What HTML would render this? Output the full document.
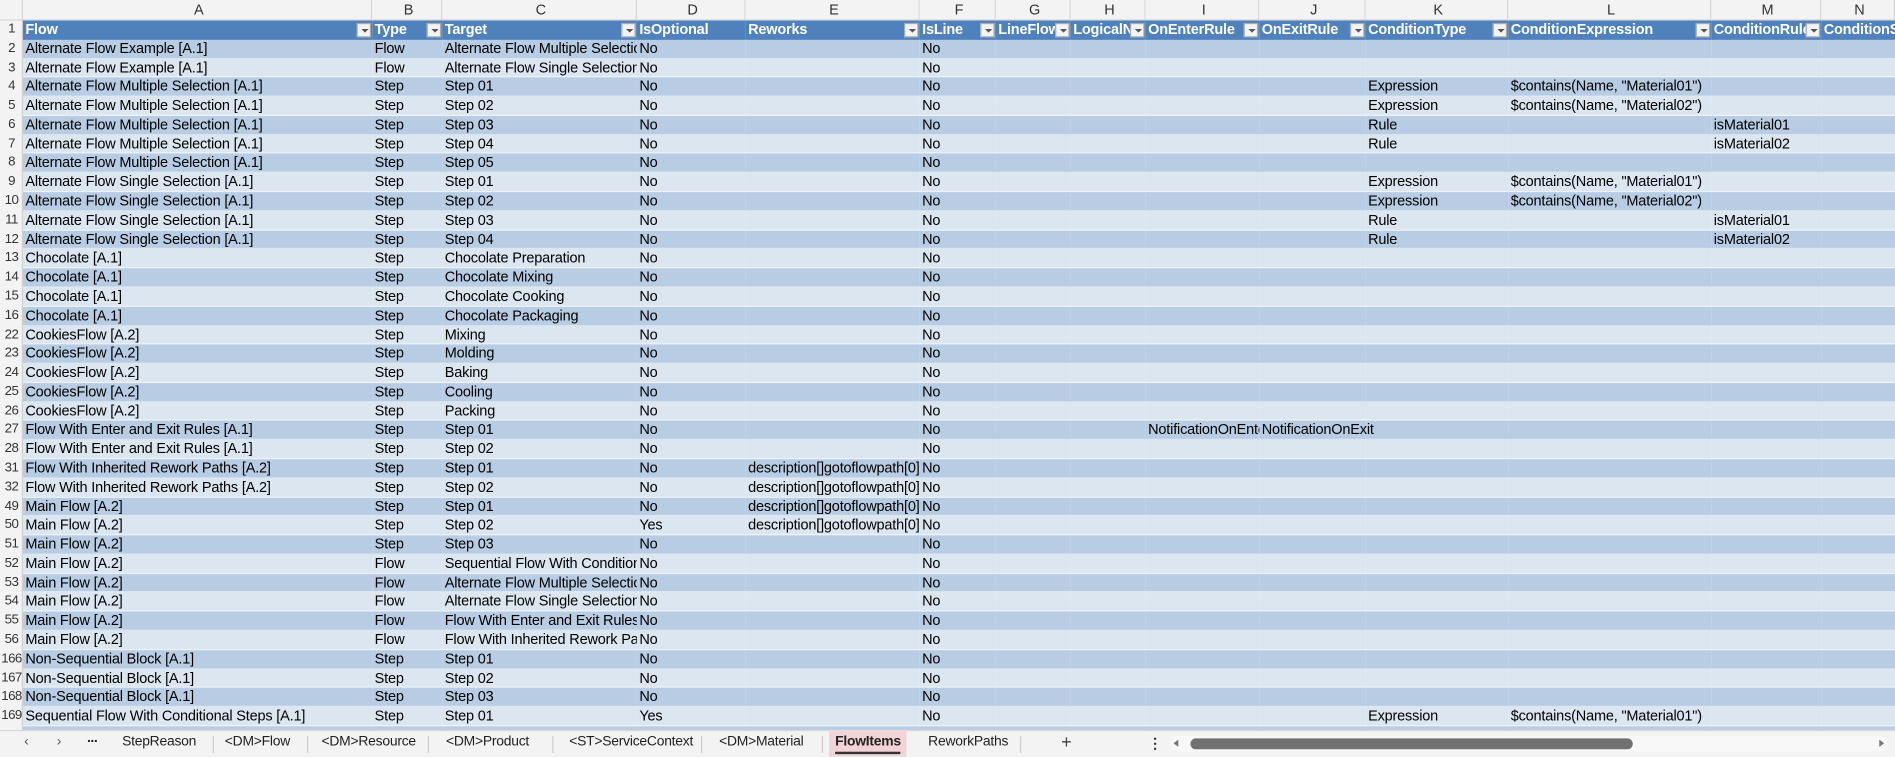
<!DOCTYPE html>
<html><head><meta charset="utf-8"><style>
html,body{margin:0;padding:0;width:1895px;height:757px;overflow:hidden;background:#fff}
#w{width:1568px;height:626.4px;transform:scale(1.20855);transform-origin:0 0;position:relative;font-family:"Liberation Sans",sans-serif;font-size:12px;color:#000}
table{border-collapse:separate;border-spacing:0;table-layout:fixed;position:absolute;left:0;top:0;width:1568px}
td{padding:0 0 0 2px;margin:0;border:0;white-space:nowrap;overflow:hidden;height:15.78px;line-height:15.78px;letter-spacing:-0.15px;box-sizing:border-box;vertical-align:middle}
tr.ch td{height:17px;line-height:17px;background:#f3f3f3;text-align:center;color:#333;box-shadow:inset -1px -1px 0 #d4d4d4}
td.rn{text-align:center;background:#f3f3f3;color:#333;padding:0;box-shadow:inset -1px 0 0 #d0d0d0;font-size:11px;letter-spacing:-0.5px}
tr.h td{background:#4f81bd;color:#fff;font-weight:bold;position:relative}
tr.h td.rn{background:#f3f3f3;color:#333;font-weight:normal}
tr.d td{background:#b8cce4;box-shadow:inset 0 -1px 0 #dce6f1}
tr.l td{background:#dce6f1;box-shadow:inset 0 -1px 0 #eef2f8}
tr.d td.rn,tr.l td.rn{background:#f3f3f3;box-shadow:inset -1px 0 0 #d0d0d0}
.f{position:absolute;right:1px;top:1.5px;width:12px;height:12px;background:#f4f4f4;border:1px solid #aaa;box-sizing:border-box}
.f:after{content:"";position:absolute;left:3px;top:4px;border-left:3px solid transparent;border-right:3px solid transparent;border-top:3px solid #555}
.ov{overflow:visible}
#tabs{position:absolute;left:0;top:604px;width:1568px;height:22.4px;background:#f3f3f3;border-top:1px solid #d8d8d8;font-size:11.5px;color:#222;letter-spacing:-0.2px}
#tabs span{position:absolute;top:3px}
.sep{position:absolute;top:4px;width:1px;height:14px;background:#ccc}
</style></head><body><div id="w">
<table>
<colgroup><col style="width:19px"><col style="width:289px"><col style="width:58px"><col style="width:161px"><col style="width:90px"><col style="width:144px"><col style="width:63px"><col style="width:62px"><col style="width:62px"><col style="width:94px"><col style="width:88px"><col style="width:118px"><col style="width:168px"><col style="width:91px"><col style="width:61px"></colgroup>
<tr class="ch"><td style="background:#f3f3f3"></td><td>A</td><td>B</td><td>C</td><td>D</td><td>E</td><td>F</td><td>G</td><td>H</td><td>I</td><td>J</td><td>K</td><td>L</td><td>M</td><td>N</td></tr>
<tr class="h"><td class="rn">1</td><td>Flow<i class="f"></i></td><td>Type<i class="f"></i></td><td>Target<i class="f"></i></td><td>IsOptional</td><td>Reworks<i class="f"></i></td><td>IsLine<i class="f"></i></td><td>LineFlow<i class="f"></i></td><td>LogicalNa<i class="f"></i></td><td>OnEnterRule<i class="f"></i></td><td>OnExitRule<i class="f"></i></td><td>ConditionType<i class="f"></i></td><td>ConditionExpression<i class="f"></i></td><td>ConditionRule<i class="f"></i></td><td>ConditionS</td></tr>
<tr class="d"><td class="rn">2</td><td>Alternate Flow Example [A.1]</td><td>Flow</td><td>Alternate Flow Multiple Selection</td><td>No</td><td></td><td>No</td><td></td><td></td><td></td><td></td><td></td><td></td><td></td><td></td></tr>
<tr class="l"><td class="rn">3</td><td>Alternate Flow Example [A.1]</td><td>Flow</td><td>Alternate Flow Single Selection</td><td>No</td><td></td><td>No</td><td></td><td></td><td></td><td></td><td></td><td></td><td></td><td></td></tr>
<tr class="d"><td class="rn">4</td><td>Alternate Flow Multiple Selection [A.1]</td><td>Step</td><td>Step 01</td><td>No</td><td></td><td>No</td><td></td><td></td><td></td><td></td><td>Expression</td><td>$contains(Name, "Material01")</td><td></td><td></td></tr>
<tr class="l"><td class="rn">5</td><td>Alternate Flow Multiple Selection [A.1]</td><td>Step</td><td>Step 02</td><td>No</td><td></td><td>No</td><td></td><td></td><td></td><td></td><td>Expression</td><td>$contains(Name, "Material02")</td><td></td><td></td></tr>
<tr class="d"><td class="rn">6</td><td>Alternate Flow Multiple Selection [A.1]</td><td>Step</td><td>Step 03</td><td>No</td><td></td><td>No</td><td></td><td></td><td></td><td></td><td>Rule</td><td></td><td>isMaterial01</td><td></td></tr>
<tr class="l"><td class="rn">7</td><td>Alternate Flow Multiple Selection [A.1]</td><td>Step</td><td>Step 04</td><td>No</td><td></td><td>No</td><td></td><td></td><td></td><td></td><td>Rule</td><td></td><td>isMaterial02</td><td></td></tr>
<tr class="d"><td class="rn">8</td><td>Alternate Flow Multiple Selection [A.1]</td><td>Step</td><td>Step 05</td><td>No</td><td></td><td>No</td><td></td><td></td><td></td><td></td><td></td><td></td><td></td><td></td></tr>
<tr class="l"><td class="rn">9</td><td>Alternate Flow Single Selection [A.1]</td><td>Step</td><td>Step 01</td><td>No</td><td></td><td>No</td><td></td><td></td><td></td><td></td><td>Expression</td><td>$contains(Name, "Material01")</td><td></td><td></td></tr>
<tr class="d"><td class="rn">10</td><td>Alternate Flow Single Selection [A.1]</td><td>Step</td><td>Step 02</td><td>No</td><td></td><td>No</td><td></td><td></td><td></td><td></td><td>Expression</td><td>$contains(Name, "Material02")</td><td></td><td></td></tr>
<tr class="l"><td class="rn">11</td><td>Alternate Flow Single Selection [A.1]</td><td>Step</td><td>Step 03</td><td>No</td><td></td><td>No</td><td></td><td></td><td></td><td></td><td>Rule</td><td></td><td>isMaterial01</td><td></td></tr>
<tr class="d"><td class="rn">12</td><td>Alternate Flow Single Selection [A.1]</td><td>Step</td><td>Step 04</td><td>No</td><td></td><td>No</td><td></td><td></td><td></td><td></td><td>Rule</td><td></td><td>isMaterial02</td><td></td></tr>
<tr class="l"><td class="rn">13</td><td>Chocolate [A.1]</td><td>Step</td><td>Chocolate Preparation</td><td>No</td><td></td><td>No</td><td></td><td></td><td></td><td></td><td></td><td></td><td></td><td></td></tr>
<tr class="d"><td class="rn">14</td><td>Chocolate [A.1]</td><td>Step</td><td>Chocolate Mixing</td><td>No</td><td></td><td>No</td><td></td><td></td><td></td><td></td><td></td><td></td><td></td><td></td></tr>
<tr class="l"><td class="rn">15</td><td>Chocolate [A.1]</td><td>Step</td><td>Chocolate Cooking</td><td>No</td><td></td><td>No</td><td></td><td></td><td></td><td></td><td></td><td></td><td></td><td></td></tr>
<tr class="d"><td class="rn">16</td><td>Chocolate [A.1]</td><td>Step</td><td>Chocolate Packaging</td><td>No</td><td></td><td>No</td><td></td><td></td><td></td><td></td><td></td><td></td><td></td><td></td></tr>
<tr class="l"><td class="rn">22</td><td>CookiesFlow [A.2]</td><td>Step</td><td>Mixing</td><td>No</td><td></td><td>No</td><td></td><td></td><td></td><td></td><td></td><td></td><td></td><td></td></tr>
<tr class="d"><td class="rn">23</td><td>CookiesFlow [A.2]</td><td>Step</td><td>Molding</td><td>No</td><td></td><td>No</td><td></td><td></td><td></td><td></td><td></td><td></td><td></td><td></td></tr>
<tr class="l"><td class="rn">24</td><td>CookiesFlow [A.2]</td><td>Step</td><td>Baking</td><td>No</td><td></td><td>No</td><td></td><td></td><td></td><td></td><td></td><td></td><td></td><td></td></tr>
<tr class="d"><td class="rn">25</td><td>CookiesFlow [A.2]</td><td>Step</td><td>Cooling</td><td>No</td><td></td><td>No</td><td></td><td></td><td></td><td></td><td></td><td></td><td></td><td></td></tr>
<tr class="l"><td class="rn">26</td><td>CookiesFlow [A.2]</td><td>Step</td><td>Packing</td><td>No</td><td></td><td>No</td><td></td><td></td><td></td><td></td><td></td><td></td><td></td><td></td></tr>
<tr class="d"><td class="rn">27</td><td>Flow With Enter and Exit Rules [A.1]</td><td>Step</td><td>Step 01</td><td>No</td><td></td><td>No</td><td></td><td></td><td>NotificationOnEnter</td><td class="ov">NotificationOnExit</td><td></td><td></td><td></td><td></td></tr>
<tr class="l"><td class="rn">28</td><td>Flow With Enter and Exit Rules [A.1]</td><td>Step</td><td>Step 02</td><td>No</td><td></td><td>No</td><td></td><td></td><td></td><td></td><td></td><td></td><td></td><td></td></tr>
<tr class="d"><td class="rn">31</td><td>Flow With Inherited Rework Paths [A.2]</td><td>Step</td><td>Step 01</td><td>No</td><td>description[]gotoflowpath[0]</td><td>No</td><td></td><td></td><td></td><td></td><td></td><td></td><td></td><td></td></tr>
<tr class="l"><td class="rn">32</td><td>Flow With Inherited Rework Paths [A.2]</td><td>Step</td><td>Step 02</td><td>No</td><td>description[]gotoflowpath[0]</td><td>No</td><td></td><td></td><td></td><td></td><td></td><td></td><td></td><td></td></tr>
<tr class="d"><td class="rn">49</td><td>Main Flow [A.2]</td><td>Step</td><td>Step 01</td><td>No</td><td>description[]gotoflowpath[0]</td><td>No</td><td></td><td></td><td></td><td></td><td></td><td></td><td></td><td></td></tr>
<tr class="l"><td class="rn">50</td><td>Main Flow [A.2]</td><td>Step</td><td>Step 02</td><td>Yes</td><td>description[]gotoflowpath[0]</td><td>No</td><td></td><td></td><td></td><td></td><td></td><td></td><td></td><td></td></tr>
<tr class="d"><td class="rn">51</td><td>Main Flow [A.2]</td><td>Step</td><td>Step 03</td><td>No</td><td></td><td>No</td><td></td><td></td><td></td><td></td><td></td><td></td><td></td><td></td></tr>
<tr class="l"><td class="rn">52</td><td>Main Flow [A.2]</td><td>Flow</td><td>Sequential Flow With Conditional Steps</td><td>No</td><td></td><td>No</td><td></td><td></td><td></td><td></td><td></td><td></td><td></td><td></td></tr>
<tr class="d"><td class="rn">53</td><td>Main Flow [A.2]</td><td>Flow</td><td>Alternate Flow Multiple Selection</td><td>No</td><td></td><td>No</td><td></td><td></td><td></td><td></td><td></td><td></td><td></td><td></td></tr>
<tr class="l"><td class="rn">54</td><td>Main Flow [A.2]</td><td>Flow</td><td>Alternate Flow Single Selection</td><td>No</td><td></td><td>No</td><td></td><td></td><td></td><td></td><td></td><td></td><td></td><td></td></tr>
<tr class="d"><td class="rn">55</td><td>Main Flow [A.2]</td><td>Flow</td><td>Flow With Enter and Exit Rules</td><td>No</td><td></td><td>No</td><td></td><td></td><td></td><td></td><td></td><td></td><td></td><td></td></tr>
<tr class="l"><td class="rn">56</td><td>Main Flow [A.2]</td><td>Flow</td><td>Flow With Inherited Rework Paths</td><td>No</td><td></td><td>No</td><td></td><td></td><td></td><td></td><td></td><td></td><td></td><td></td></tr>
<tr class="d"><td class="rn">166</td><td>Non-Sequential Block [A.1]</td><td>Step</td><td>Step 01</td><td>No</td><td></td><td>No</td><td></td><td></td><td></td><td></td><td></td><td></td><td></td><td></td></tr>
<tr class="l"><td class="rn">167</td><td>Non-Sequential Block [A.1]</td><td>Step</td><td>Step 02</td><td>No</td><td></td><td>No</td><td></td><td></td><td></td><td></td><td></td><td></td><td></td><td></td></tr>
<tr class="d"><td class="rn">168</td><td>Non-Sequential Block [A.1]</td><td>Step</td><td>Step 03</td><td>No</td><td></td><td>No</td><td></td><td></td><td></td><td></td><td></td><td></td><td></td><td></td></tr>
<tr class="l"><td class="rn">169</td><td>Sequential Flow With Conditional Steps [A.1]</td><td>Step</td><td>Step 01</td><td>Yes</td><td></td><td>No</td><td></td><td></td><td></td><td></td><td>Expression</td><td>$contains(Name, "Material01")</td><td></td><td></td></tr>
<tr class="d"><td class="rn"></td><td></td><td></td><td></td><td></td><td></td><td></td><td></td><td></td><td></td><td></td><td></td><td></td><td></td><td></td></tr>
</table>
<div id="tabs">
<span style="left:20px;color:#555">&lsaquo;</span><span style="left:47px;color:#555">&rsaquo;</span><span style="left:72px;font-weight:bold;letter-spacing:-1px">&middot;&middot;&middot;</span>
<span style="left:101px">StepReason</span><i class="sep" style="left:176px"></i>
<span style="left:186px">&lt;DM&gt;Flow</span><i class="sep" style="left:254px"></i>
<span style="left:266px">&lt;DM&gt;Resource</span><i class="sep" style="left:354px"></i>
<span style="left:369px">&lt;DM&gt;Product</span><i class="sep" style="left:457px"></i>
<span style="left:471px">&lt;ST&gt;ServiceContext</span><i class="sep" style="left:580px"></i>
<span style="left:595px">&lt;DM&gt;Material</span><i class="sep" style="left:680px"></i>
<div style="position:absolute;left:686px;top:-1px;width:64px;height:22px;background:#f2d4d6;border:1px solid #ddd;box-sizing:border-box"></div>
<span style="left:691px;font-weight:bold">FlowItems</span>
<div style="position:absolute;left:691px;top:17px;width:54px;height:2px;background:#333"></div>
<span style="left:768px">ReworkPaths</span><i class="sep" style="left:844px"></i>
<span style="left:878px;font-size:15px;top:1px;color:#444">+</span>
<span style="left:950px;font-weight:bold">&#8942;</span>
<div style="position:absolute;left:968px;top:4px;width:594px;height:13px;background:#f8f8f8;border-radius:6px"></div>
<div style="position:absolute;left:971px;top:7px;border-top:3.5px solid transparent;border-bottom:3.5px solid transparent;border-right:4px solid #777"></div>
<div style="position:absolute;left:985px;top:6px;width:366px;height:9px;background:#717171;border-radius:5px"></div>
<div style="position:absolute;left:1555px;top:7px;border-top:3.5px solid transparent;border-bottom:3.5px solid transparent;border-left:4px solid #777"></div>
</div>
</div></body></html>
